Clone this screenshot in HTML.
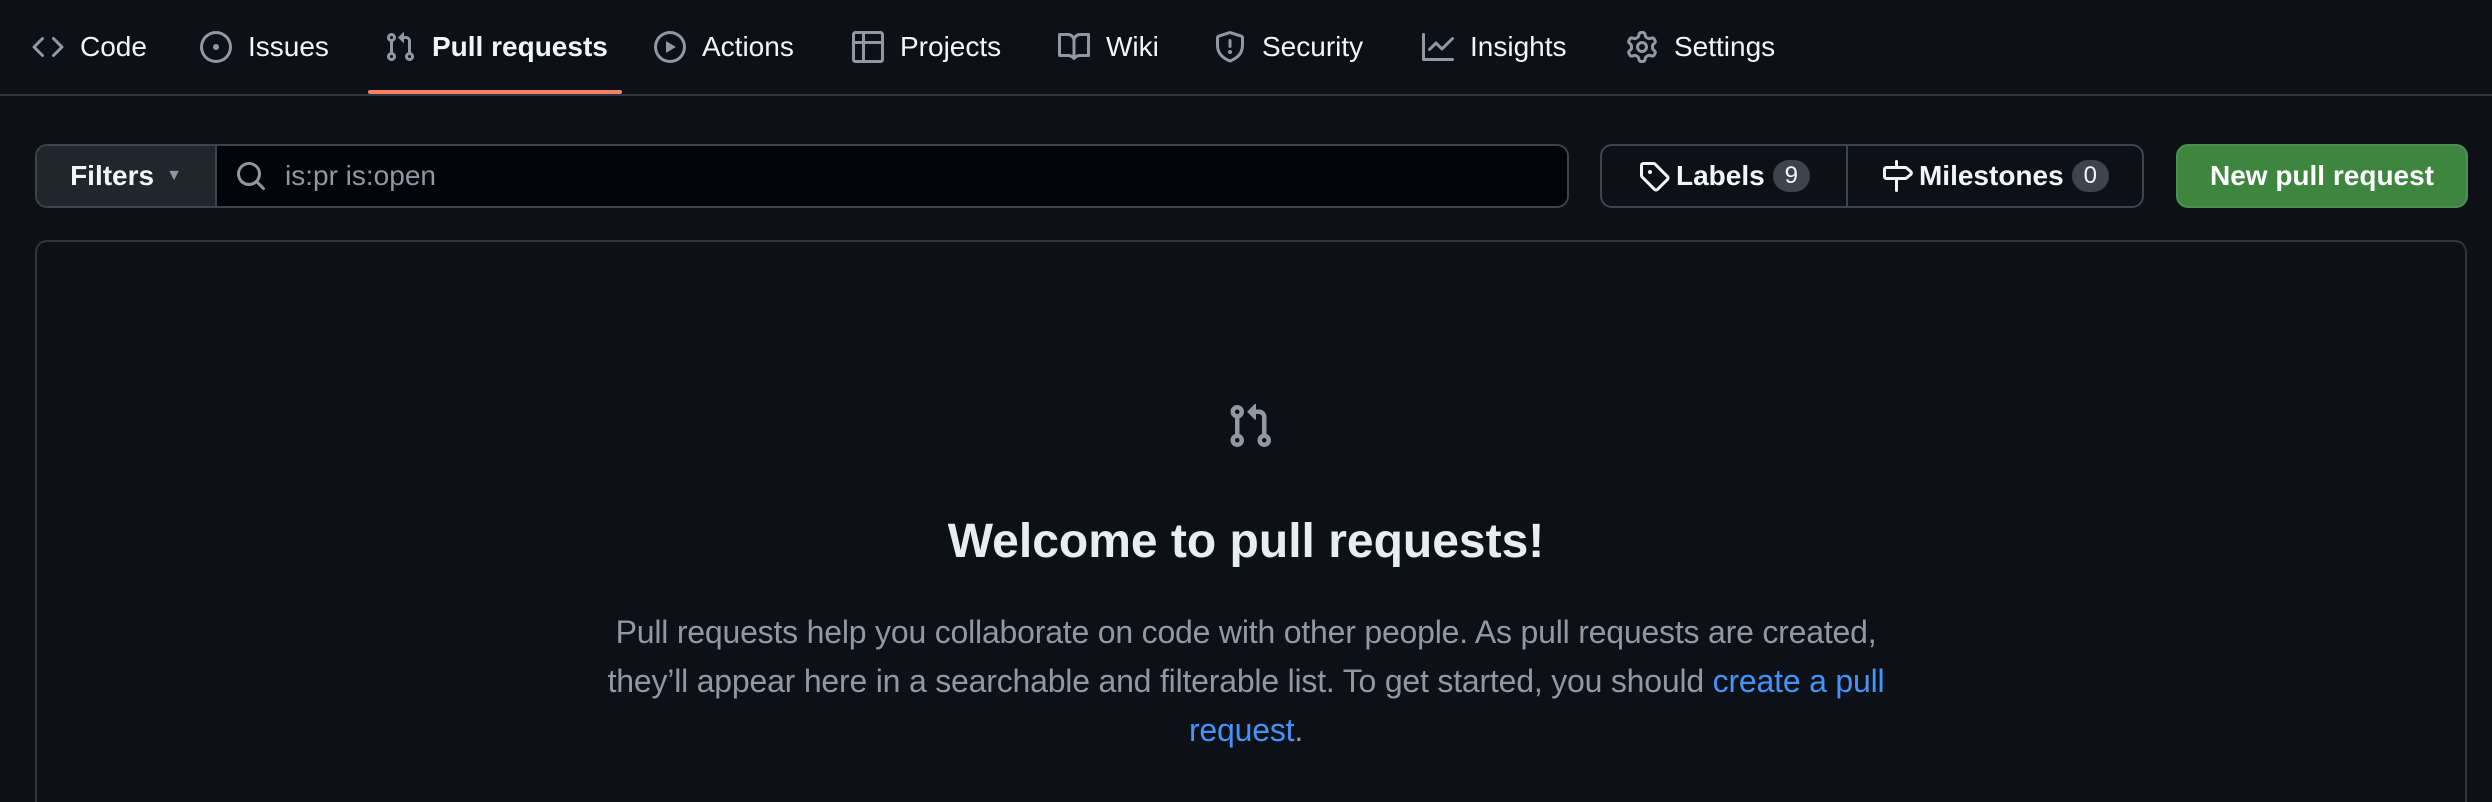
<!DOCTYPE html>
<html><head><meta charset="utf-8"><style>
html{zoom:2;overflow:hidden;height:401px}
body{margin:0;width:1246px;height:401px;overflow:hidden;background:#0d1117;color:#f0f6fc;font-family:"Liberation Sans",sans-serif;font-size:14px;position:relative}
.nav{position:absolute;left:0;top:0;width:1246px;height:47px;border-bottom:1px solid #30363d}
.it{position:absolute;top:0;height:47px;display:flex;align-items:center;color:#f0f6fc;font-size:14px;white-space:nowrap}
.it svg{width:16px;height:16px;fill:#9198a1;margin-right:8px}
.ul{position:absolute;left:184px;top:45px;width:127px;height:2px;background:#f78166;border-radius:2px}
.filt{position:absolute;left:17.5px;top:72px;width:765px;height:30px;border:1px solid #3d444d;border-radius:6px;overflow:hidden;display:flex}
.fb{width:89px;background:#21262d;border-right:1px solid #3d444d;display:flex;align-items:center;justify-content:center;font-weight:bold;font-size:14px}
.fs{flex:1;background:#010409;display:flex;align-items:center;padding-left:9px;color:#9198a1}
.lm{position:absolute;left:800px;top:72px;width:270px;height:30px;border:1px solid #3d444d;border-radius:6px;display:flex}
.lm div{display:flex;align-items:center;justify-content:center;font-weight:bold;font-size:14px}
.bd{background:#3d444d;border-radius:10px;font-size:12px;font-weight:normal;padding:1px 6px;margin-left:4px}
.np{position:absolute;left:1088px;top:72px;width:144px;height:30px;background:#3e8540;border:1px solid #4a9150;border-radius:6px;display:flex;align-items:center;justify-content:center;font-weight:bold;color:#fff}
.box{position:absolute;left:17.5px;top:120px;width:1214px;height:281px;border:1px solid #30363d;border-bottom:none;border-radius:6px 6px 0 0}
h2{position:absolute;left:0;width:1246px;top:256px;margin:0;text-align:center;font-size:24px;color:#e6edf3;line-height:30px}
p{position:absolute;left:0;width:1246px;top:304px;margin:0;text-align:center;font-size:16px;line-height:24.5px;color:#9198a1;white-space:nowrap;letter-spacing:-0.1px}
a{color:#4493f8;text-decoration:none}
</style></head><body>
<div class="nav">
<div class="it" style="left:16px"><svg viewBox="0 0 16 16"><path d="M4.72 3.22a.75.75 0 0 1 1.06 1.06L2.06 8l3.72 3.72a.75.75 0 1 1-1.06 1.06L.47 8.53a.75.75 0 0 1 0-1.06Zm6.560 0a.75.75 0 1 0-1.06 1.06L13.94 8l-3.72 3.72a.75.75 0 1 0 1.06 1.06l4.25-4.25a.75.75 0 0 0 0-1.06Z"/></svg>Code</div>
<div class="it" style="left:100px"><svg viewBox="0 0 16 16"><path d="M8 9.5a1.5 1.5 0 1 0 0-3 1.5 1.5 0 0 0 0 3Z"/><path d="M8 0a8 8 0 1 1 0 16A8 8 0 0 1 8 0ZM1.5 8a6.5 6.5 0 1 0 13 0 6.5 6.5 0 0 0-13 0Z"/></svg>Issues</div>
<div class="it" style="left:192px;font-weight:bold"><svg viewBox="0 0 16 16"><path d="M1.5 3.25a2.25 2.25 0 1 1 3 2.122v5.256a2.251 2.251 0 1 1-1.5 0V5.372A2.25 2.25 0 0 1 1.5 3.25Zm5.677-.177L9.573.677A.25.25 0 0 1 10 .854V2.5h1A2.5 2.5 0 0 1 13.5 5v5.628a2.251 2.251 0 1 1-1.5 0V5a1 1 0 0 0-1-1h-1v1.646a.25.25 0 0 1-.427.177L7.177 3.427a.25.25 0 0 1 0-.354ZM3.75 2.5a.75.75 0 1 0 0 1.5.75.75 0 0 0 0-1.5Zm0 9.5a.75.75 0 1 0 0 1.5.75.75 0 0 0 0-1.5Zm8.25.75a.75.75 0 1 0 1.5 0 .75.75 0 0 0-1.5 0Z"/></svg>Pull requests</div>
<div class="it" style="left:327px"><svg viewBox="0 0 16 16"><path d="M8 0a8 8 0 1 1 0 16A8 8 0 0 1 8 0ZM1.5 8a6.5 6.5 0 1 0 13 0 6.5 6.5 0 0 0-13 0Zm4.879-2.773 4.264 2.559a.25.25 0 0 1 0 .428l-4.264 2.559A.25.25 0 0 1 6 10.559V5.442a.25.25 0 0 1 .379-.215Z"/></svg>Actions</div>
<div class="it" style="left:426px"><svg viewBox="0 0 16 16"><path d="M0 1.75C0 .784.784 0 1.750 0h12.5C15.216 0 16 .784 16 1.75v12.5A1.75 1.75 0 0 1 14.25 16H1.75A1.75 1.75 0 0 1 0 14.25ZM6.5 6.5v8h7.75a.25.25 0 0 0 .25-.25V6.5Zm8-1.5V1.75a.25.25 0 0 0-.25-.25H6.5V5Zm-13 1.5v7.75c0 .138.112.25.25.25H5v-8ZM5 5V1.5H1.75a.25.25 0 0 0-.25.25V5Z"/></svg>Projects</div>
<div class="it" style="left:529px"><svg viewBox="0 0 16 16"><path d="M0 1.75A.75.75 0 0 1 .75 1h4.253c1.227 0 2.317.59 3 1.501A3.743 3.743 0 0 1 11.006 1h4.245a.75.75 0 0 1 .75.75v10.5a.75.75 0 0 1-.75.75h-4.507a2.25 2.25 0 0 0-1.591.659l-.622.621a.75.75 0 0 1-1.060 0l-.622-.621A2.25 2.25 0 0 0 5.258 13H.75a.75.75 0 0 1-.75-.75Zm7.251 10.324.004-5.073-.002-2.253A2.25 2.25 0 0 0 5.003 2.5H1.5v9h3.757a3.75 3.75 0 0 1 1.994.574ZM8.755 4.75l-.004 7.322a3.752 3.752 0 0 1 1.992-.572H14.5v-9h-3.495a2.25 2.25 0 0 0-2.25 2.25Z"/></svg>Wiki</div>
<div class="it" style="left:607px"><svg viewBox="0 0 16 16"><path d="M7.467.133a1.748 1.748 0 0 1 1.066 0l5.25 1.68A1.75 1.75 0 0 1 15 3.48V7c0 1.566-.32 3.182-1.303 4.682-.983 1.498-2.585 2.813-5.032 3.855a1.697 1.697 0 0 1-1.33 0c-2.447-1.042-4.049-2.357-5.032-3.855C1.32 10.182 1 8.566 1 7V3.48a1.755 1.755 0 0 1 1.217-1.667Zm.61 1.429a.25.25 0 0 0-.153 0l-5.25 1.68a.25.25 0 0 0-.174.238V7c0 1.358.275 2.666 1.057 3.86.784 1.194 2.121 2.34 4.366 3.297a.196.196 0 0 0 .154 0c2.245-.956 3.582-2.104 4.366-3.298C13.225 9.666 13.5 8.36 13.5 7V3.48a.251.251 0 0 0-.174-.237l-5.25-1.68ZM8.75 4.75v3a.75.75 0 0 1-1.5 0v-3a.75.75 0 0 1 1.5 0ZM9 10.5a1 1 0 1 1-2 0 1 1 0 0 1 2 0Z"/></svg>Security</div>
<div class="it" style="left:711px"><svg viewBox="0 0 16 16"><path d="M1.5 1.75V13.5h13.75a.75.75 0 0 1 0 1.5H.75a.75.75 0 0 1-.75-.75V1.75a.75.75 0 0 1 1.5 0Zm14.28 2.53-5.25 5.25a.75.75 0 0 1-1.06 0L7 7.06 4.28 9.78a.751.751 0 0 1-1.042-.018.751.751 0 0 1-.018-1.042l3.25-3.25a.75.75 0 0 1 1.06 0L10 7.94l4.72-4.72a.751.751 0 0 1 1.042.018.751.751 0 0 1 .018 1.042Z"/></svg>Insights</div>
<div class="it" style="left:813px"><svg viewBox="0 0 16 16"><path d="M8 0a8.2 8.2 0 0 1 .701.031C9.444.095 9.99.645 10.16 1.29l.288 1.107c.018.066.079.158.212.224.231.114.454.243.668.386.123.082.233.09.299.071l1.103-.303c.644-.176 1.392.021 1.82.63.27.385.506.792.704 1.218.315.675.111 1.422-.364 1.891l-.814.806c-.049.048-.098.147-.088.294.016.257.016.515 0 .772-.01.147.038.246.088.294l.814.806c.475.469.679 1.216.364 1.891a7.977 7.977 0 0 1-.704 1.217c-.428.61-1.176.807-1.82.63l-1.102-.302c-.067-.019-.177-.011-.3.071a5.909 5.909 0 0 1-.668.386c-.133.066-.194.158-.211.224l-.29 1.106c-.168.646-.715 1.196-1.458 1.26a8.006 8.006 0 0 1-1.402 0c-.743-.064-1.289-.614-1.458-1.26l-.289-1.106c-.018-.066-.079-.158-.212-.224a5.738 5.738 0 0 1-.668-.386c-.123-.082-.233-.09-.299-.071l-1.103.303c-.644.176-1.392-.021-1.82-.63a8.12 8.12 0 0 1-.704-1.218c-.315-.675-.111-1.422.363-1.891l.815-.806c.05-.048.098-.147.088-.294a6.214 6.214 0 0 1 0-.772c.01-.147-.038-.246-.088-.294l-.815-.806C.635 6.045.431 5.298.746 4.623a7.92 7.92 0 0 1 .704-1.217c.428-.61 1.176-.807 1.82-.63l1.102.302c.067.019.177.011.3-.071.214-.143.437-.272.668-.386.133-.066.194-.158.211-.224l.29-1.106C6.009.645 6.556.095 7.299.03 7.53.01 7.764 0 8 0Zm-.571 1.525c-.036.003-.108.036-.137.146l-.289 1.105c-.147.561-.549.967-.998 1.189-.173.086-.34.183-.5.29-.417.278-.97.423-1.529.27l-1.103-.303c-.109-.03-.175.016-.195.045-.22.312-.412.644-.573.99-.014.031-.021.11.059.19l.815.806c.411.406.562.957.53 1.456a4.709 4.709 0 0 0 0 .582c.032.499-.119 1.05-.53 1.456l-.815.806c-.081.08-.073.159-.059.19.162.346.353.677.573.989.02.03.085.076.195.046l1.102-.303c.56-.153 1.113-.008 1.53.27.161.107.328.204.501.29.447.222.85.629.997 1.189l.289 1.105c.029.109.101.143.137.146a6.6 6.6 0 0 0 1.142 0c.036-.003.108-.036.137-.146l.289-1.105c.147-.561.549-.967.998-1.189.173-.086.34-.183.5-.29.417-.278.97-.423 1.529-.27l1.103.303c.109.029.175-.016.195-.045.22-.313.411-.644.573-.99.014-.031.021-.11-.059-.19l-.815-.806c-.411-.406-.562-.957-.53-1.456a4.709 4.709 0 0 0 0-.582c-.032-.499.119-1.05.53-1.456l.815-.806c.081-.08.073-.159.059-.19a6.464 6.464 0 0 0-.573-.989c-.02-.03-.085-.076-.195-.046l-1.102.303c-.56.153-1.113.008-1.53-.27a4.44 4.44 0 0 0-.501-.29c-.447-.222-.85-.629-.997-1.189l-.289-1.105c-.029-.11-.101-.143-.137-.146a6.6 6.6 0 0 0-1.142 0ZM11 8a3 3 0 1 1-6 0 3 3 0 0 1 6 0ZM9.5 8a1.5 1.5 0 1 0-3.001.001A1.5 1.5 0 0 0 9.5 8Z"/></svg>Settings</div>
<div class="ul"></div>
</div>
<div class="filt"><div class="fb">Filters <span style="font-size:8px;color:#9198a1;margin-left:6px">▼</span></div>
<div class="fs"><svg viewBox="0 0 16 16" width="16" height="16" fill="#9198a1" style="margin-right:9px"><path d="M10.68 11.74a6 6 0 0 1-7.922-8.982 6 6 0 0 1 8.982 7.922l3.04 3.04a.749.749 0 0 1-.326 1.275.749.749 0 0 1-.734-.215ZM11.5 7a4.499 4.499 0 1 0-8.997 0A4.499 4.499 0 0 0 11.5 7Z"/></svg>is:pr is:open</div></div>
<div class="lm"><div style="width:122px;border-right:1px solid #3d444d"><svg viewBox="0 0 16 16" width="16" height="16" fill="#f0f6fc" style="margin-right:3px"><path d="M1 7.775V2.75C1 1.784 1.784 1 2.75 1h5.025c.464 0 .91.184 1.238.513l6.25 6.25a1.75 1.75 0 0 1 0 2.474l-5.026 5.026a1.75 1.75 0 0 1-2.474 0l-6.25-6.25A1.752 1.752 0 0 1 1 7.775Zm1.5 0c0 .066.026.13.073.177l6.25 6.25a.25.25 0 0 0 .354 0l5.025-5.025a.25.25 0 0 0 0-.354l-6.25-6.25a.25.25 0 0 0-.177-.073H2.75a.25.25 0 0 0-.25.25ZM6 5a1 1 0 1 1 0 2 1 1 0 0 1 0-2Z"/></svg>Labels<span class="bd">9</span></div>
<div style="flex:1"><svg viewBox="0 0 16 16" width="16" height="16" fill="#f0f6fc" style="margin-right:3px"><path d="M7.75 0a.75.75 0 0 1 .75.75V3h3.634c.414 0 .814.147 1.13.414l2.07 1.75a1.75 1.75 0 0 1 0 2.672l-2.07 1.75a1.75 1.75 0 0 1-1.13.414H8.5v5.25a.75.75 0 0 1-1.5 0V10H2.75A1.75 1.75 0 0 1 1 8.25v-3.5C1 3.784 1.784 3 2.75 3H7V.75A.75.75 0 0 1 7.75 0Zm4.384 8.5a.25.25 0 0 0 .161-.06l2.07-1.75a.248.248 0 0 0 0-.38l-2.07-1.75a.25.25 0 0 0-.161-.06H2.75a.25.25 0 0 0-.25.25v3.5c0 .138.112.25.25.25h9.384Z"/></svg>Milestones<span class="bd">0</span></div></div>
<div class="np">New pull request</div>
<div class="box"></div>
<svg viewBox="0 0 16 16" width="24" height="24" fill="#9198a1" style="position:absolute;left:613px;top:201px"><path d="M1.5 3.25a2.25 2.25 0 1 1 3 2.122v5.256a2.251 2.251 0 1 1-1.5 0V5.372A2.25 2.25 0 0 1 1.5 3.25Zm5.677-.177L9.573.677A.25.25 0 0 1 10 .854V2.5h1A2.5 2.5 0 0 1 13.5 5v5.628a2.251 2.251 0 1 1-1.5 0V5a1 1 0 0 0-1-1h-1v1.646a.25.25 0 0 1-.427.177L7.177 3.427a.25.25 0 0 1 0-.354ZM3.75 2.5a.75.75 0 1 0 0 1.5.75.75 0 0 0 0-1.5Zm0 9.5a.75.75 0 1 0 0 1.5.75.75 0 0 0 0-1.5Zm8.25.75a.75.75 0 1 0 1.5 0 .75.75 0 0 0-1.5 0Z"/></svg>
<h2>Welcome to pull requests!</h2>
<p>Pull requests help you collaborate on code with other people. As pull requests are created,<br>they’ll appear here in a searchable and filterable list. To get started, you should <a>create a pull</a><br><a>request</a>.</p>
</body></html>
